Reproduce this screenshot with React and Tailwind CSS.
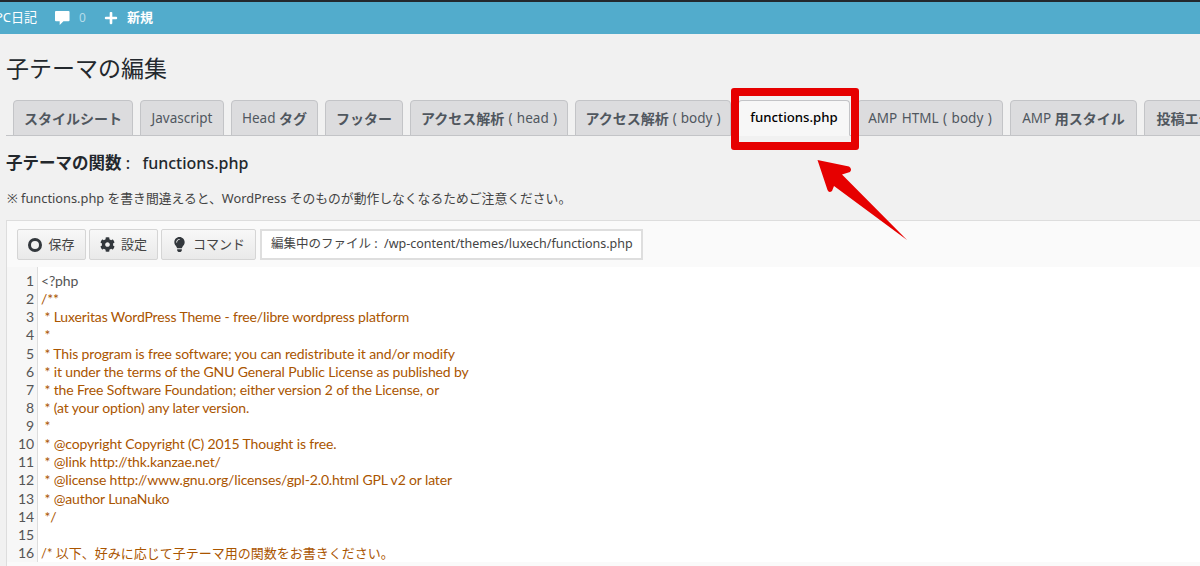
import React from 'react'
import { FaCog, FaLightbulb, FaPlus } from 'react-icons/fa'

const font = { fontFamily: '"Noto Sans", "Noto Sans CJK JP", sans-serif' }
const codeFont = { fontFamily: 'Lato, "Noto Sans CJK JP", sans-serif' }

const tabs = [
  { w: 'w-[120px]', parts: [['スタイルシート', true]] },
  { w: 'w-[84px]', parts: [['Javascript', false]] },
  { w: 'w-[87px]', parts: [['Head ', false], ['タグ', true]] },
  { w: 'w-[78px]', parts: [['フッター', true]] },
  { w: 'w-[158px]', cls: '[word-spacing:0.75px]', parts: [['アクセス解析', true], [' ( head )', false]] },
  { w: 'w-[156px]', cls: '[word-spacing:0.5px]', parts: [['アクセス解析', true], [' ( body )', false]] },
  { w: 'w-[112px]', active: true, parts: [['functions.php', false]] },
  { w: 'w-[146px]', cls: '[word-spacing:1px]', parts: [['AMP HTML ( body )', false]] },
  { w: 'w-[127px]', parts: [['AMP ', false], ['用スタイル', true]] },
  { w: 'w-[108px]', parts: [['投稿エディタ', true]] },
]

const lines = [
  ['<?php', 'text-[#555555]'],
  ['/**'],
  [' * Luxeritas WordPress Theme - free/libre wordpress platform'],
  [' *'],
  [' * This program is free software; you can redistribute it and/or modify'],
  [' * it under the terms of the GNU General Public License as published by'],
  [' * the Free Software Foundation; either version 2 of the License, or'],
  [' * (at your option) any later version.'],
  [' *'],
  [' * @copyright Copyright (C) 2015 Thought is free.'],
  [' * @link http://thk.kanzae.net/'],
  [' * @license http://www.gnu.org/licenses/gpl-2.0.html GPL v2 or later'],
  [' * @author LunaNuko'],
  [' */'],
  [''],
  ['/* 以下、好みに応じて子テーマ用の関数をお書きください。', 'text-[13px] tracking-normal'],
]

function Tab({ tab }) {
  return (
    <div
      className={`${tab.w} ${tab.cls || ''} shrink-0 h-[36px] flex items-center justify-center whitespace-pre rounded-t-[4px] border border-[#c3c4c7] ${
        tab.active ? 'bg-[#f7f7f7] border-b-[#f7f7f7] text-black font-medium text-[13.2px]' : 'bg-[#dcdcde] text-[#50575e] text-[13.5px]'
      }`}
    >
      {tab.parts.map(([text, bold], i) => (
        <span key={i} className={bold ? 'font-bold text-[14px]' : ''}>{text}</span>
      ))}
    </div>
  )
}

function ToolButton({ icon, label, w }) {
  return (
    <div className={`${w} h-[31px] flex items-center justify-center gap-[6px] rounded-[2px] border border-[#d5d5d5] bg-gradient-to-b from-[#f8f8f8] to-[#e9e9e9] text-[13px] text-[#444444]`}>
      {icon}
      <span>{label}</span>
    </div>
  )
}

export default function App() {
  return (
    <div style={font} className="relative w-[1200px] h-[566px] overflow-hidden bg-[#f1f1f1]">
      {/* admin bar */}
      <div className="h-[34px] border-t-2 border-[#23282d] bg-[#52accc] flex items-center text-white text-[13px]">
        <span className="ml-[-5px]">PC日記</span>
        <svg className="ml-[18px]" width="15" height="16" viewBox="0 0 16 16" fill="#fff">
          <path d="M1 0.5h13.5a1 1 0 0 1 1 1v9a1 1 0 0 1-1 1H9L5 15.5v-4H1a1 1 0 0 1-1-1v-9a1 1 0 0 1 1-1z" />
        </svg>
        <span className="ml-[9px] text-[#b5dcea] text-[12px]">0</span>
        <FaPlus className="ml-[18px] text-[14px]" />
        <span className="ml-[9px] font-bold text-[13px]">新規</span>
      </div>

      <h1 className="ml-[6px] mt-[17px] text-[23px] leading-[34px] text-[#23282d]">子テーマの編集</h1>

      {/* tabs */}
      <div className="mt-[15px] ml-[6px] pl-[7px] flex gap-[7px] border-b border-[#c3c4c7] h-[36px]">
        {tabs.map((tab, i) => <Tab key={i} tab={tab} />)}
      </div>

      <div className="ml-[6px] mt-[15px] text-[16px] leading-[24px] text-[#23282d] whitespace-pre">
        <span className="font-bold text-[16.5px]">子テーマの関数</span>
        <span className="font-medium"> :   functions.php</span>
      </div>

      <p className="ml-[7px] mt-[14px] text-[12.8px] leading-[18px] text-[#444444]">
        ※ functions.php を書き間違えると、WordPress そのものが動作しなくなるためご注意ください。
      </p>

      {/* editor */}
      <div className="ml-[6px] mt-[13px] border-t border-l border-[#dddddd] bg-[#fafafa] h-[400px]">
        <div className="flex gap-[3px] pl-[10px] pt-[8px]">
          <ToolButton
            w="w-[69px]"
            label="保存"
            icon={<span className="w-[14px] h-[14px] rounded-full border-[3px] border-[#32373c]" />}
          />
          <ToolButton w="w-[69px]" label="設定" icon={<FaCog className="text-[15px] text-[#32373c]" />} />
          <ToolButton w="w-[95px]" label="コマンド" icon={<FaLightbulb className="text-[15px] text-[#32373c]" />} />
          <div className="w-[383px] h-[31px] flex items-center pl-[9px] bg-white border-2 border-[#dedede] text-[12.5px] text-[#444444] whitespace-pre ml-px">
            編集中のファイル :  /wp-content/themes/luxech/functions.php
          </div>
        </div>

        <div style={codeFont} className="flex mt-[7px] bg-white text-[14px] leading-[18.13px] pt-[5px] tracking-[-0.14px]">
          <div className="w-[31px] -mt-[5px] pt-[5px] pr-[3px] shrink-0 bg-[#f7f7f7] border-r border-[#dddddd] text-right text-[#555555]">
            {lines.map((_, i) => <div key={i}>{i + 1}</div>)}
          </div>
          <div className="pl-[3px] text-[#aa5500] whitespace-pre">
            {lines.map(([text, cls], i) => (
              <div key={i} className={`h-[18.13px] ${cls || ''}`}>{text}</div>
            ))}
          </div>
        </div>
      </div>

      {/* red highlight over the active tab */}
      <div className="absolute left-[731px] top-[88px] w-[128px] h-[62px] rounded-[3px] border-[8px] border-[#e60000]" />

      {/* arrow annotation */}
      <svg className="absolute left-[810px] top-[155px]" width="100" height="90" viewBox="810 155 100 90">
        <path
          d="M817.5 160 L849 166.5 Q852.5 169 850 172 L842 174.5 L907 240 L834 186 L832 191 Q829 193.5 827.5 190 Z"
          fill="#e60000"
        />
      </svg>
    </div>
  )
}
